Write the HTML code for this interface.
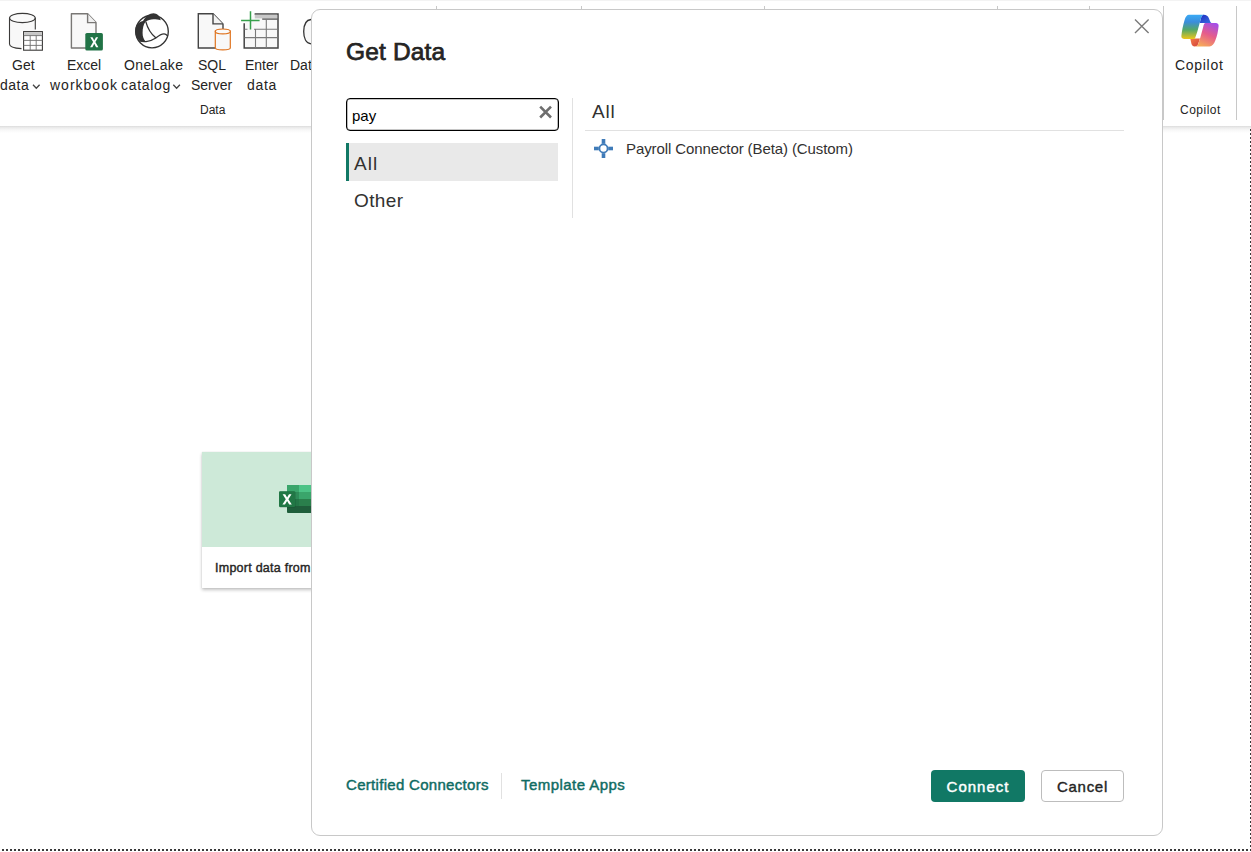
<!DOCTYPE html>
<html><head><meta charset="utf-8">
<style>
*{margin:0;padding:0;box-sizing:border-box}
html,body{width:1251px;height:852px;overflow:hidden;background:#fff}
body{position:relative;font-family:"Liberation Sans",sans-serif;color:#252423}
.a{position:absolute;white-space:nowrap}
.rl{font-size:14px;line-height:20px;color:#252423}
.sep{position:absolute;width:1px;background:#c8c8c8}
.dotsH{position:absolute;height:2px;background:repeating-linear-gradient(90deg,#3a3a3a 0 2px,transparent 2px 4px)}
.dotsV{position:absolute;width:2px;background:repeating-linear-gradient(180deg,#3a3a3a 0 2px,transparent 2px 4px)}
</style></head><body>
<!-- top strip -->
<div class="a" style="left:0;top:0;width:1251px;height:1px;background:#f3f3f3"></div>
<!-- ribbon shadow -->
<div class="a" style="left:0;top:126px;width:1251px;height:7px;background:linear-gradient(#dcdcdc,#ececec 25%,#f7f7f7 55%,#fff)"></div>

<!-- ribbon separators -->
<div class="sep" style="left:436px;top:6px;height:114px"></div>
<div class="sep" style="left:581px;top:6px;height:114px"></div>
<div class="sep" style="left:764px;top:6px;height:114px"></div>
<div class="sep" style="left:997px;top:6px;height:114px"></div>
<div class="sep" style="left:1089px;top:6px;height:114px"></div>
<div class="sep" style="left:1163px;top:6px;height:114px"></div>
<div class="sep" style="left:1236px;top:6px;height:114px"></div>

<!-- ribbon labels -->
<div class="a rl" style="left:12px;top:55px">Get</div>
<div class="a rl" style="left:0px;top:75px;letter-spacing:0.5px">data</div>
<div class="a rl" style="left:67px;top:55px">Excel</div>
<div class="a rl" style="left:50px;top:75px;letter-spacing:1px">workbook</div>
<div class="a rl" style="left:124px;top:55px;letter-spacing:0.35px">OneLake</div>
<div class="a rl" style="left:121px;top:75px;letter-spacing:0.7px">catalog</div>
<div class="a rl" style="left:198px;top:55px">SQL</div>
<div class="a rl" style="left:191px;top:75px">Server</div>
<div class="a rl" style="left:245px;top:55px">Enter</div>
<div class="a rl" style="left:247px;top:75px;letter-spacing:0.7px">data</div>
<div class="a rl" style="left:290px;top:55px">Data</div>
<div class="a" style="left:200px;top:102px;font-size:12px;line-height:16px">Data</div>
<div class="a rl" style="left:1175px;top:55px;letter-spacing:0.7px">Copilot</div>
<div class="a" style="left:1180px;top:102px;font-size:12px;line-height:16px;letter-spacing:0.5px">Copilot</div>

<!-- ribbon icons -->
<svg class="a" style="left:0;top:0" width="330" height="60" viewBox="0 0 330 60">
  <!-- Get data -->
  <path d="M9.5 18 L9.5 44 Q9.5 48 21.5 48.5 L21.5 31 L35.3 31 L35.3 18 Z" fill="#f8f8f8"/>
  <ellipse cx="22.4" cy="18" rx="12.9" ry="4.6" fill="#fafafa" stroke="#3b3a39" stroke-width="1.1"/>
  <path d="M9.5 18 L9.5 44 C9.5 46.5 14 48.3 21.5 48.6" fill="none" stroke="#3b3a39" stroke-width="1.1"/>
  <path d="M35.3 18 L35.3 29.5" fill="none" stroke="#3b3a39" stroke-width="1.1"/>
  <rect x="23.6" y="31.6" width="18.8" height="18.6" fill="#fff" stroke="#3b3a39" stroke-width="1.1"/>
  <rect x="24.2" y="32.2" width="17.6" height="3.2" fill="#c6c6c6"/>
  <path d="M23.6 35.6 H42.4 M23.6 40.4 H42.4 M23.6 45.4 H42.4 M30.2 35.6 V50.2 M36.2 35.6 V50.2" stroke="#6f6f6f" stroke-width="0.9" fill="none"/>
  <!-- Excel workbook -->
  <path d="M71.4 13.8 H87.6 L96 22.4 V48 H71.4 Z" fill="#f8f8f8" stroke="#797775" stroke-width="1.4" stroke-linejoin="round"/>
  <path d="M87.6 13.8 V22.6 H96" fill="#f0f0f0" stroke="#797775" stroke-width="1.4"/>
  <rect x="85.3" y="33" width="17.6" height="17.5" rx="1.6" fill="#217346"/>
  <path transform="translate(90.1 37.2) scale(0.883 0.96)" d="M0.2 0 H2.8 L4.7 3.4 L6.6 0 H9.1 L6 5 L9.4 10.4 H6.8 L4.7 6.7 L2.6 10.4 H0 L3.4 5 Z" fill="#fff"/>
  <!-- OneLake -->
  <circle cx="152" cy="31.5" r="16.3" fill="none" stroke="#333" stroke-width="1.35"/>
  <path d="M143 20.9 C146 16 149.5 13.2 153.5 13.2 C157 13.2 159.5 16 160.6 19.6 L160.6 20.3 C158.5 19.6 156 19.3 153.5 19.3 C150.5 19.3 147.5 20.3 145.6 21.7 C143.5 24 142.6 28 142.6 33 C142.6 36.5 143.5 39 145.4 41.3 L139.8 41.3 C136.8 38.5 135.2 35 135.2 31 C135.2 26 138 22 143 20.9 Z" fill="#333"/>
  <path d="M145.8 21.6 C147.5 28 150.5 33.5 156 38.1" fill="none" stroke="#333" stroke-width="1.3"/>
  <path d="M139.5 41 C141.5 41.6 143.5 41.8 146 41.6 C150 41 153 40 155.8 38 C158.5 35.8 161 33.9 164 33.9 C165.5 33.9 166.8 35 167.8 36" fill="none" stroke="#333" stroke-width="1.3"/>
  <!-- SQL Server -->
  <path d="M198.3 13.8 H213 L223 24 V48 H198.3 Z" fill="#f8f8f8" stroke="#444" stroke-width="1.4"/>
  <path d="M213 13.8 V23.9 H223" fill="#f3f3f3" stroke="#444" stroke-width="1.4"/>
  <path d="M215.3 31.2 V48 C215.3 50.5 230.3 50.5 230.3 48 V31.2 Z" fill="#f8f8f8" stroke="#df7420" stroke-width="1.2"/>
  <ellipse cx="222.8" cy="31.4" rx="7.5" ry="2.4" fill="#fafafa" stroke="#df7420" stroke-width="1.2"/>
  <!-- Enter data -->
  <path d="M244.2 23.2 V48 H278 V14 H254.6" fill="#f8f8f8" stroke="#444" stroke-width="1.5"/>
  <rect x="254.8" y="14.8" width="22.4" height="3.6" fill="#c8c8c8"/>
  <path d="M262.2 19.1 H277.6" stroke="#555" stroke-width="1.3"/>
  <path d="M244.5 29.2 H247.5 M254 29.2 H277.6 M244.5 37.6 H277.6 M255.5 29.2 V48 M266.3 19.1 V48" stroke="#7a7a7a" stroke-width="1.1" fill="none"/>
  <path d="M250.5 11.2 V29.6 M241.1 20.6 H259.6" stroke="#36a04b" stroke-width="1.5" fill="none"/>
  <!-- Dat partial -->
  <path d="M311 19.5 C306 20 303.7 25 303.7 31.6 C303.7 38 306 43.5 311 43.8" fill="#f8f8f8" stroke="#333" stroke-width="1.3"/>
</svg>

<!-- chevrons -->
  <path d="M33 85 L36.5 88.5 L40 85" fill="none" stroke="#444" stroke-width="1.2" transform="translate(0,0)"/>
</svg>

<!-- chevrons -->
<svg class="a" style="left:0;top:80px" width="200" height="12" viewBox="0 80 200 12">
  <path d="M33 84.8 L36.3 88.2 L39.6 84.8" fill="none" stroke="#444" stroke-width="1.3"/>
  <path d="M173.3 84.8 L176.6 88.2 L179.9 84.8" fill="none" stroke="#444" stroke-width="1.3"/>
</svg>

<!-- copilot icon -->
<svg class="a" style="left:1175px;top:8px" width="50" height="47" viewBox="1175 8 50 47">
  <defs>
    <linearGradient id="gl" x1="0" y1="0" x2="0" y2="1">
      <stop offset="0" stop-color="#3aaaf5"/>
      <stop offset="0.3" stop-color="#3b8ddb"/>
      <stop offset="0.62" stop-color="#55a866"/>
      <stop offset="1" stop-color="#ecc51a"/>
    </linearGradient>
    <linearGradient id="gr" x1="0.8" y1="0" x2="0.35" y2="1">
      <stop offset="0" stop-color="#a34ee9"/>
      <stop offset="0.5" stop-color="#e65c8a"/>
      <stop offset="1" stop-color="#f6a85a"/>
    </linearGradient>
    <linearGradient id="gt" x1="0" y1="0" x2="1" y2="1">
      <stop offset="0" stop-color="#1e2bc0"/>
      <stop offset="1" stop-color="#3a70e2"/>
    </linearGradient>
    <linearGradient id="gb" x1="0" y1="0" x2="1" y2="1">
      <stop offset="0" stop-color="#f37a48"/>
      <stop offset="1" stop-color="#d2403a"/>
    </linearGradient>
  </defs>
  <path d="M1203.5 14.8 C1206.5 14.8 1208 16 1209 18.5 L1210.2 21.5 C1210.6 22.4 1211 22.9 1211.5 22.9 L1199.7 22.9 L1201.2 17.5 C1201.7 15.8 1202.5 14.8 1203.5 14.8 Z" fill="url(#gt)"/>
  <path d="M1190.3 38.6 L1199.9 38.6 L1198 44.5 C1197.3 45.8 1196.2 46.5 1194.5 46.5 C1193 46.5 1192 45.5 1191.5 44 Z" fill="url(#gb)"/>
  <path d="M1189 14.8 L1204.6 14.8 C1202.8 14.8 1201.8 15.8 1201.2 17.5 L1197.2 31.9 L1195.5 37 C1195.1 38.2 1194.6 38.9 1194 38.9 L1184 38.9 C1182 38.9 1181.2 37.5 1181.4 35.8 C1181.9 31 1183 25 1184.6 20 C1185.5 16.8 1187 14.8 1189 14.8 Z" fill="url(#gl)"/>
  <path d="M1205.5 22.9 L1215.8 22.9 C1217.8 22.9 1218.8 24.2 1218.6 26 C1218.2 31 1217 36.5 1215.3 40.5 C1214 44 1212 46.5 1209.5 46.5 L1194.5 46.5 C1196.2 46.5 1197.3 45.8 1198 44.5 C1198.6 43 1199.3 40.5 1200.2 38 L1203.2 27 C1203.7 24.3 1204.4 22.9 1205.5 22.9 Z" fill="url(#gr)"/>
</svg>

<!-- canvas card -->
<div class="a" style="left:202px;top:452px;width:120px;height:136px;background:#fff;box-shadow:0 1.6px 3.2px rgba(0,0,0,.24),0 0 1px rgba(0,0,0,.12)">
  <div style="height:95px;background:#cde9d8"></div>
</div>
<svg class="a" style="left:270px;top:480px" width="41" height="40" viewBox="270 480 41 40">
  <rect x="287" y="485" width="30" height="7" fill="#3aa56b"/>
  <rect x="299" y="485" width="18" height="7" fill="#4cc386"/>
  <rect x="287" y="492" width="30" height="7" fill="#2e8c58"/>
  <rect x="299" y="492" width="18" height="7" fill="#3aa56b"/>
  <rect x="287" y="499" width="30" height="7" fill="#237647"/>
  <rect x="299" y="499" width="18" height="7" fill="#2a7f4c"/>
  <rect x="287" y="506" width="30" height="7" rx="1" fill="#1f5e3b"/>
  <rect x="279.5" y="491.6" width="16" height="16" rx="1" fill="#153f27" opacity="0.35"/>
  <rect x="279" y="491.2" width="16" height="15.8" rx="1" fill="#217745"/>
  <path d="M282.6 494.2 H285.2 L287.1 497.6 L289 494.2 H291.5 L288.4 499.2 L291.8 504.6 H289.2 L287.1 500.9 L285 504.6 H282.4 L285.8 499.2 Z" fill="#fff"/>
</svg>
<div class="a" style="left:215px;top:560px;font-size:12.5px;line-height:16px;-webkit-text-stroke:0.4px #252423;color:#252423;letter-spacing:0.25px">Import data from</div>

<!-- dotted canvas border -->
<div class="dotsH" style="left:2px;top:849px;width:1249px"></div>
<div class="dotsV" style="left:1250px;top:129px;height:722px"></div>

<!-- dialog -->
<div class="a" style="left:311px;top:9px;width:852px;height:827px;background:#fff;border:1px solid #c8c8c8;border-radius:9px"></div>
<div class="a" style="left:346px;top:37px;font-size:24.5px;line-height:30px;color:#252423;-webkit-text-stroke:0.75px #252423;letter-spacing:0.15px">Get Data</div>

<!-- close X -->
<svg class="a" style="left:1130px;top:15px" width="24" height="24" viewBox="0 0 24 24">
  <path d="M5 4.6 L18.6 18 M18.6 4.6 L5 18" stroke="#7a7a7a" stroke-width="1.4" fill="none"/>
</svg>

<!-- search -->
<div class="a" style="left:346px;top:98px;width:213px;height:33px;border:1px solid #000;border-radius:4px;box-shadow:inset 0 0 0 0.6px rgba(0,0,0,.45)"></div>
<div class="a" style="left:352px;top:106px;font-size:15px;line-height:20px;color:#000">pay</div>
<svg class="a" style="left:536px;top:103px" width="20" height="20" viewBox="0 0 20 20">
  <path d="M4.2 3.7 L15 14.5 M15 3.7 L4.2 14.5" stroke="#6e6e6e" stroke-width="2.6" fill="none"/>
</svg>

<!-- nav -->
<div class="a" style="left:346px;top:143px;width:212px;height:38px;background:#e9e9e9"></div>
<div class="a" style="left:346px;top:143px;width:3px;height:38px;background:#117865"></div>
<div class="a" style="left:354px;top:152px;font-size:19px;line-height:24px;color:#323130;letter-spacing:1px">All</div>
<div class="a" style="left:354px;top:189px;font-size:19px;line-height:24px;color:#323130;letter-spacing:0.4px">Other</div>

<div class="a" style="left:572px;top:98px;width:1px;height:120px;background:#e1e1e1"></div>

<!-- results -->
<div class="a" style="left:592px;top:100px;font-size:19px;line-height:24px;color:#323130;letter-spacing:0.8px">All</div>
<div class="a" style="left:585px;top:130px;width:539px;height:1px;background:#e1e1e1"></div>
<svg class="a" style="left:593px;top:138px" width="21" height="21" viewBox="0 0 21 21">
  <g fill="#3f7bb8">
    <rect x="8.7" y="1" width="3.6" height="4.8"/>
    <rect x="8.7" y="15.2" width="3.6" height="4.8"/>
    <rect x="1" y="8.7" width="4.8" height="3.6"/>
    <rect x="15.2" y="8.7" width="4.8" height="3.6"/>
  </g>
  <circle cx="10.5" cy="10.5" r="4.05" fill="none" stroke="#3f7bb8" stroke-width="1.75"/>
</svg>
<div class="a" style="left:626px;top:139px;font-size:15px;line-height:20px;color:#323130;letter-spacing:-0.1px">Payroll Connector (Beta) (Custom)</div>

<!-- footer -->
<div class="a" style="left:346px;top:775px;font-size:15px;line-height:20px;color:#0f6c63;-webkit-text-stroke:0.45px #0f6c63;letter-spacing:0.3px">Certified Connectors</div>
<div class="a" style="left:501px;top:773px;width:1px;height:26px;background:#e1e1e1"></div>
<div class="a" style="left:521px;top:775px;font-size:15px;line-height:20px;color:#0f6c63;-webkit-text-stroke:0.45px #0f6c63;letter-spacing:0.45px">Template Apps</div>

<div class="a" style="left:931px;top:770px;width:94px;height:32px;background:#117865;border-radius:4px;color:#fff;font-size:15px;-webkit-text-stroke:0.45px #fff;line-height:34px;text-align:center;letter-spacing:1px">Connect</div>
<div class="a" style="left:1041px;top:770px;width:83px;height:32px;background:#fff;border:1px solid #bdbdbd;border-radius:4px;color:#252423;font-size:15px;-webkit-text-stroke:0.4px #252423;line-height:32px;text-align:center;letter-spacing:0.7px">Cancel</div>

</body></html>
